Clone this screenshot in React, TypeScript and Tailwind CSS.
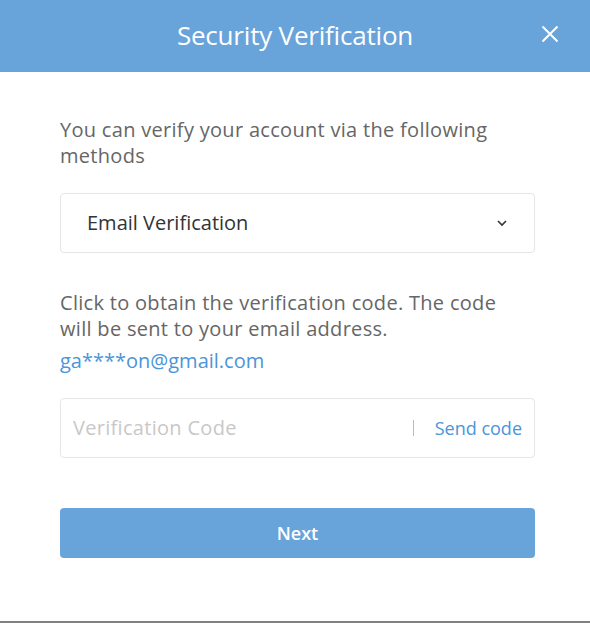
import React from 'react';

const font = { fontFamily: '"Open Sans", "Noto Sans", sans-serif' };

export default function App() {
  return (
    <div className="w-[590px] h-[623px] bg-white flex flex-col" style={font}>
      {/* Header */}
      <div className="h-[72px] bg-[#68a3da] relative flex items-center justify-center shrink-0 pb-[2px]">
        <h1 className="text-[26px] text-white tracking-[-0.2px]">Security Verification</h1>
        <button className="absolute right-[31px] top-[25px] text-white">
          <svg width="18" height="18" viewBox="0 0 18 18" fill="none" stroke="currentColor" strokeWidth="2">
            <path d="M1.5 1.5 L16.5 16.5 M16.5 1.5 L1.5 16.5" />
          </svg>
        </button>
      </div>

      {/* Body */}
      <div className="flex-1 flex flex-col pl-[60px] pr-[55px] pt-[45px]">
        <p className="text-[20px] leading-[26px] tracking-[0.3px] text-[#666]">
          You can verify your account via the following methods
        </p>

        <div className="mt-[24px] h-[60px] border border-[#e6e6e6] rounded-[4px] flex items-center justify-between pl-[26px] pr-[26px]">
          <span className="text-[20px] text-[#333]">Email Verification</span>
          <svg width="12" height="8" viewBox="0 0 12 8" fill="none" stroke="#333" strokeWidth="1.6">
            <path d="M2 2 L6 6 L10 2" />
          </svg>
        </div>

        <p className="mt-[37px] max-w-[450px] text-[20px] leading-[26px] tracking-[0.3px] text-[#666]">
          Click to obtain the verification code. The code will be sent to your email address.
        </p>
        <p className="mt-[6px] text-[20px] leading-[26px] text-[#4b95d8]">ga****on@gmail.com</p>

        <div className="mt-[24px] h-[60px] border border-[#e6e6e6] rounded-[4px] flex items-center pl-[12px] pr-[12px]">
          <span className="flex-1 text-[20px] tracking-[0.3px] text-[#c8c8c8]">Verification Code</span>
          <span className="w-px h-[16px] bg-[#bbb] mr-[21px]" />
          <span className="text-[18px] text-[#4b95d8]">Send code</span>
        </div>

        <button className="mt-[50px] h-[50px] rounded-[4px] bg-[#68a3da] text-white text-[18px] font-semibold">
          Next
        </button>
      </div>

      <div className="h-[2px] bg-[#808080] shrink-0" />
    </div>
  );
}
